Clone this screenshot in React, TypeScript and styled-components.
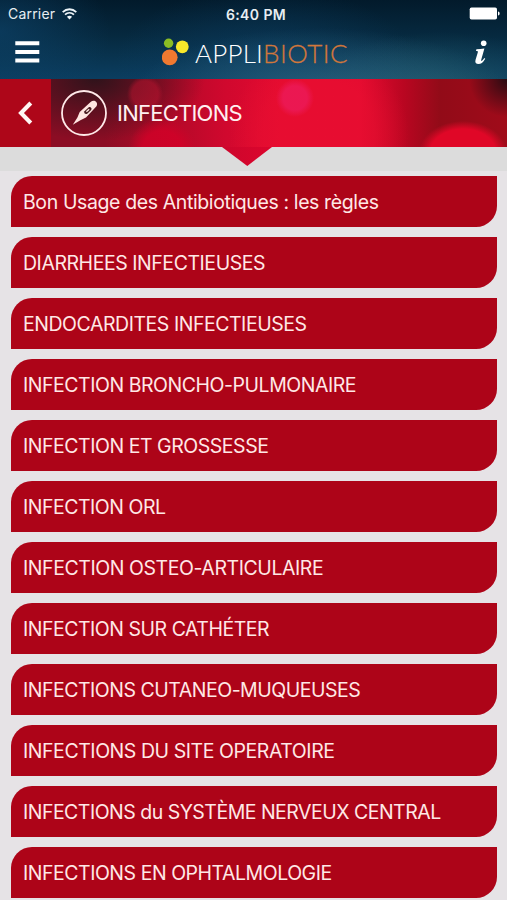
import React from "react";
import styled, { createGlobalStyle } from "styled-components";

const GlobalStyle = createGlobalStyle`
  * { box-sizing: border-box; }
  html, body { margin: 0; padding: 0; background: #e6e3e6; }
  body { overflow: hidden; font-family: Inter, "Liberation Sans", sans-serif; }
  button { font: inherit; color: inherit; border: 0; background: none; padding: 0; }
`;

const Screen = styled.main`
  width: 507px;
  height: 900px;
  overflow: hidden;
  background: #e6e3e6;
`;

const TopArea = styled.header`
  height: 79px;
  background:
    radial-gradient(ellipse 190px 70px at 320px 98px, rgba(49, 107, 132, 0.75), transparent),
    radial-gradient(ellipse 130px 60px at 440px 92px, rgba(35, 91, 104, 0.7), transparent),
    radial-gradient(ellipse 150px 75px at 265px 62px, rgba(13, 64, 102, 0.6), transparent),
    radial-gradient(ellipse 110px 75px at 0px 32px, rgba(13, 67, 106, 0.65), transparent),
    linear-gradient(#021a2b 0%, #06293f 45%, #0b3e60 100%);
`;

const StatusBar = styled.div`
  height: 28px;
  display: grid;
  grid-template-columns: 1fr auto 1fr;
  align-items: center;
  padding: 0 7px 0 8px;
  color: #e8eef2;
  font-size: 14px;
`;

const Carrier = styled.div`
  display: flex;
  align-items: center;
  gap: 7px;
  letter-spacing: 0.2px;
  padding-bottom: 1px;
`;

const Clock = styled.div`
  font-size: 14px;
  font-weight: 600;
  letter-spacing: 0.4px;
  padding-left: 4px;
`;

const BatterySlot = styled.div`
  display: flex;
  justify-content: flex-end;
  padding-bottom: 2px;
`;

const NavBar = styled.div`
  height: 51px;
  display: grid;
  grid-template-columns: 162px 1fr 41px;
`;

const MenuButton = styled.button`
  display: flex;
  align-items: flex-start;
  padding: 13px 0 0 15px;
`;

const Brand = styled.div`
  display: flex;
  align-items: flex-start;
  padding-top: 10px;
`;

const BrandName = styled.span`
  margin: -1px 0 0 6px;
  font: 300 26px/33px Lato, sans-serif;
  color: #fff;
  letter-spacing: 0.2px;
  white-space: nowrap;
`;

const BrandAccent = styled.span`
  color: #d2773b;
  -webkit-text-stroke: 0.3px #d2773b;
  letter-spacing: 0.5px;
`;

const InfoButton = styled.button`
  display: flex;
  align-items: flex-start;
  padding: 12px 0 0 8px;
`;

const TitleBar = styled.section`
  height: 68px;
  display: flex;
  background:
    radial-gradient(circle at 295px 19px, rgba(236, 26, 90, 0.8) 0 12px, transparent 19px),
    radial-gradient(circle at 145px 15px, rgba(190, 20, 48, 0.5) 0 13px, transparent 18px),
    radial-gradient(circle at 162px 72px, rgba(214, 0, 40, 0.75) 0 20px, transparent 34px),
    radial-gradient(ellipse 44px 32px at 463px 74px, #e00727 0 75%, transparent),
    radial-gradient(circle at 319px 57px, rgba(235, 16, 49, 0.5) 0 56px, transparent 90px),
    radial-gradient(circle at 507px 0px, #280b12 0, transparent 38px),
    radial-gradient(ellipse 110px 62px at 95px 0, #30131b, transparent),
    linear-gradient(90deg, #8c0d24 0 105px, #a80a26 150px, #d0082e 225px, #e30a30 280px, #e30a30 360px, #b90621 404px, #920b18 440px, #a00b1a 507px);
`;

const BackButton = styled.button`
  width: 51px;
  height: 68px;
  background: #ae0619;
  display: flex;
  align-items: center;
  justify-content: center;
  padding-right: 2px;
`;

const Category = styled.div`
  display: flex;
  height: 67px;
  align-items: center;
  gap: 10px;
  padding-left: 10px;
`;

const Title = styled.h1`
  margin: 0;
  color: #fff0f1;
  font-size: 22px;
  font-weight: 400;
  line-height: 30px;
  letter-spacing: -0.75px;
`;

const Divider = styled.div`
  height: 24px;
  background: #dcdcdc;
  display: flex;
  padding-left: 222px;
`;

const List = styled.ul`
  list-style: none;
  margin: 0;
  padding: 4.5px 10.3px 0 10.7px;
  display: flex;
  flex-direction: column;
  gap: 10.08px;
`;

const ListItem = styled.li<{ $tracking: number }>`
  flex: 0 0 51px;
  display: flex;
  align-items: center;
  padding-left: 12.3px;
  padding-top: 1px;
  color: #ffe8e6;
  background: #ad0418;
  border-radius: 21px 0 21px 0;
  font-size: 19.5px;
  line-height: 26px;
  letter-spacing: ${({ $tracking }) => $tracking}px;
  white-space: nowrap;
`;

const topics: Array<{ label: string; tracking: number }> = [
  { label: "Bon Usage des Antibiotiques : les règles", tracking: -0.385 },
  { label: "DIARRHEES INFECTIEUSES", tracking: -0.45 },
  { label: "ENDOCARDITES INFECTIEUSES", tracking: -0.46 },
  { label: "INFECTION BRONCHO-PULMONAIRE", tracking: -0.46 },
  { label: "INFECTION ET GROSSESSE", tracking: -0.46 },
  { label: "INFECTION ORL", tracking: -0.48 },
  { label: "INFECTION OSTEO-ARTICULAIRE", tracking: -0.43 },
  { label: "INFECTION SUR CATHÉTER", tracking: -0.48 },
  { label: "INFECTIONS CUTANEO-MUQUEUSES", tracking: -0.48 },
  { label: "INFECTIONS DU SITE OPERATOIRE", tracking: -0.44 },
  { label: "INFECTIONS du SYSTÈME NERVEUX CENTRAL", tracking: -0.51 },
  { label: "INFECTIONS EN OPHTALMOLOGIE", tracking: -0.47 },
];

const WifiIcon = () => (
  <svg width="15" height="12" viewBox="0 0 15 12" fill="none" stroke="#edf4f8" strokeWidth="1.8">
    <path d="M.7 4.1C4.6.3 10.4.3 14.3 4.1M3 6.7c2.7-2.5 6.3-2.5 9 0" />
    <path d="M4.9 8.8c1.6-1.4 3.6-1.4 5.2 0L7.5 11.4Z" fill="#edf4f8" stroke="none" />
  </svg>
);

const BatteryIcon = () => (
  <svg width="31" height="13" viewBox="0 0 31 13" fill="#fff">
    <rect x=".7" y=".5" width="27.3" height="12" rx="1.8" />
    <path d="M29 4.5c2.2.5 2.2 3.5 0 4Z" />
  </svg>
);

const MenuIcon = () => (
  <svg width="25" height="23" viewBox="0 0 25 23" fill="#fff">
    <path d="M.3.3h24v4H.3zM.3 8.9h24v4H.3zM.3 17.4h24v4H.3z" />
  </svg>
);

const BrandMark = () => (
  <svg width="27" height="28" viewBox="0 0 27 28">
    <circle cx="6.6" cy="5.2" r="4.7" fill="#8bbd24" />
    <circle cx="20.3" cy="8.8" r="6.4" fill="#f8e82a" />
    <circle cx="7.7" cy="19.3" r="7.9" fill="#f07930" />
  </svg>
);

const InfoIcon = () => (
  <svg width="16" height="25" viewBox="0 0 16 25" fill="#fff">
    <circle cx="9.7" cy="3.3" r="2.8" />
    <path d="M2.4 9.3c2.8-.1 5.2-.5 8-.9L7.3 19.6c-.6 2.1.6 1.9 3.1-1.5l.8.6c-2.1 3.9-4.3 5.4-6.7 5.4-2.5 0-3.7-1.5-3-4l2.2-7.4c.4-1.5-.1-1.8-1.7-1.7Z" />
  </svg>
);

const BackIcon = () => (
  <svg width="16" height="24" viewBox="0 0 16 24" fill="none">
    <path d="M13.8 2 4 12l9.8 10" stroke="#fff5f3" strokeWidth="4.1" />
  </svg>
);

const ThermometerIcon = () => (
  <svg width="46" height="48" viewBox="0 0 46 48">
    <circle cx="23" cy="24" r="22" fill="none" stroke="#ffe9e9" strokeWidth="1.8" />
    <path d="m11.8 35.8 4.6-7.4 2.3-5.3L29.6 13c3.4-3.2 8.2.1 5.9 4.2L25 28.4l-5.6 2.8Z" fill="#ffe5e1" />
    <path d="m23.5 22.2 4-3.8c1.8-1 3.9.9 2.7 2.6l-4 3.8c-2 .9-3.8-.9-2.7-2.6Z" fill="#4a1b20" />
    <path d="m25.4 22.8 2.8-2.5" stroke="#ffe5e1" strokeWidth="1.4" />
  </svg>
);

const DownPointer = () => (
  <svg width="51" height="19" viewBox="0 0 51 19">
    <defs>
      <linearGradient id="pointer-fill">
        <stop stopColor="#cc062c" />
        <stop offset="1" stopColor="#dc052d" />
      </linearGradient>
    </defs>
    <path d="M0 0h50L25.3 19Z" fill="url(#pointer-fill)" />
  </svg>
);

export default function App() {
  return (
    <Screen>
      <GlobalStyle />
      <TopArea>
        <StatusBar>
          <Carrier><span>Carrier</span><WifiIcon /></Carrier>
          <Clock>6:40 PM</Clock>
          <BatterySlot><BatteryIcon /></BatterySlot>
        </StatusBar>
        <NavBar>
          <MenuButton aria-label="Menu"><MenuIcon /></MenuButton>
          <Brand>
            <BrandMark />
            <BrandName>APPLI<BrandAccent>BIOTIC</BrandAccent></BrandName>
          </Brand>
          <InfoButton aria-label="Informations"><InfoIcon /></InfoButton>
        </NavBar>
      </TopArea>
      <TitleBar>
        <BackButton aria-label="Retour"><BackIcon /></BackButton>
        <Category><ThermometerIcon /><Title>INFECTIONS</Title></Category>
      </TitleBar>
      <Divider><DownPointer /></Divider>
      <List>
        {topics.map(({ label, tracking }) => (
          <ListItem key={label} $tracking={tracking}>{label}</ListItem>
        ))}
      </List>
    </Screen>
  );
}
